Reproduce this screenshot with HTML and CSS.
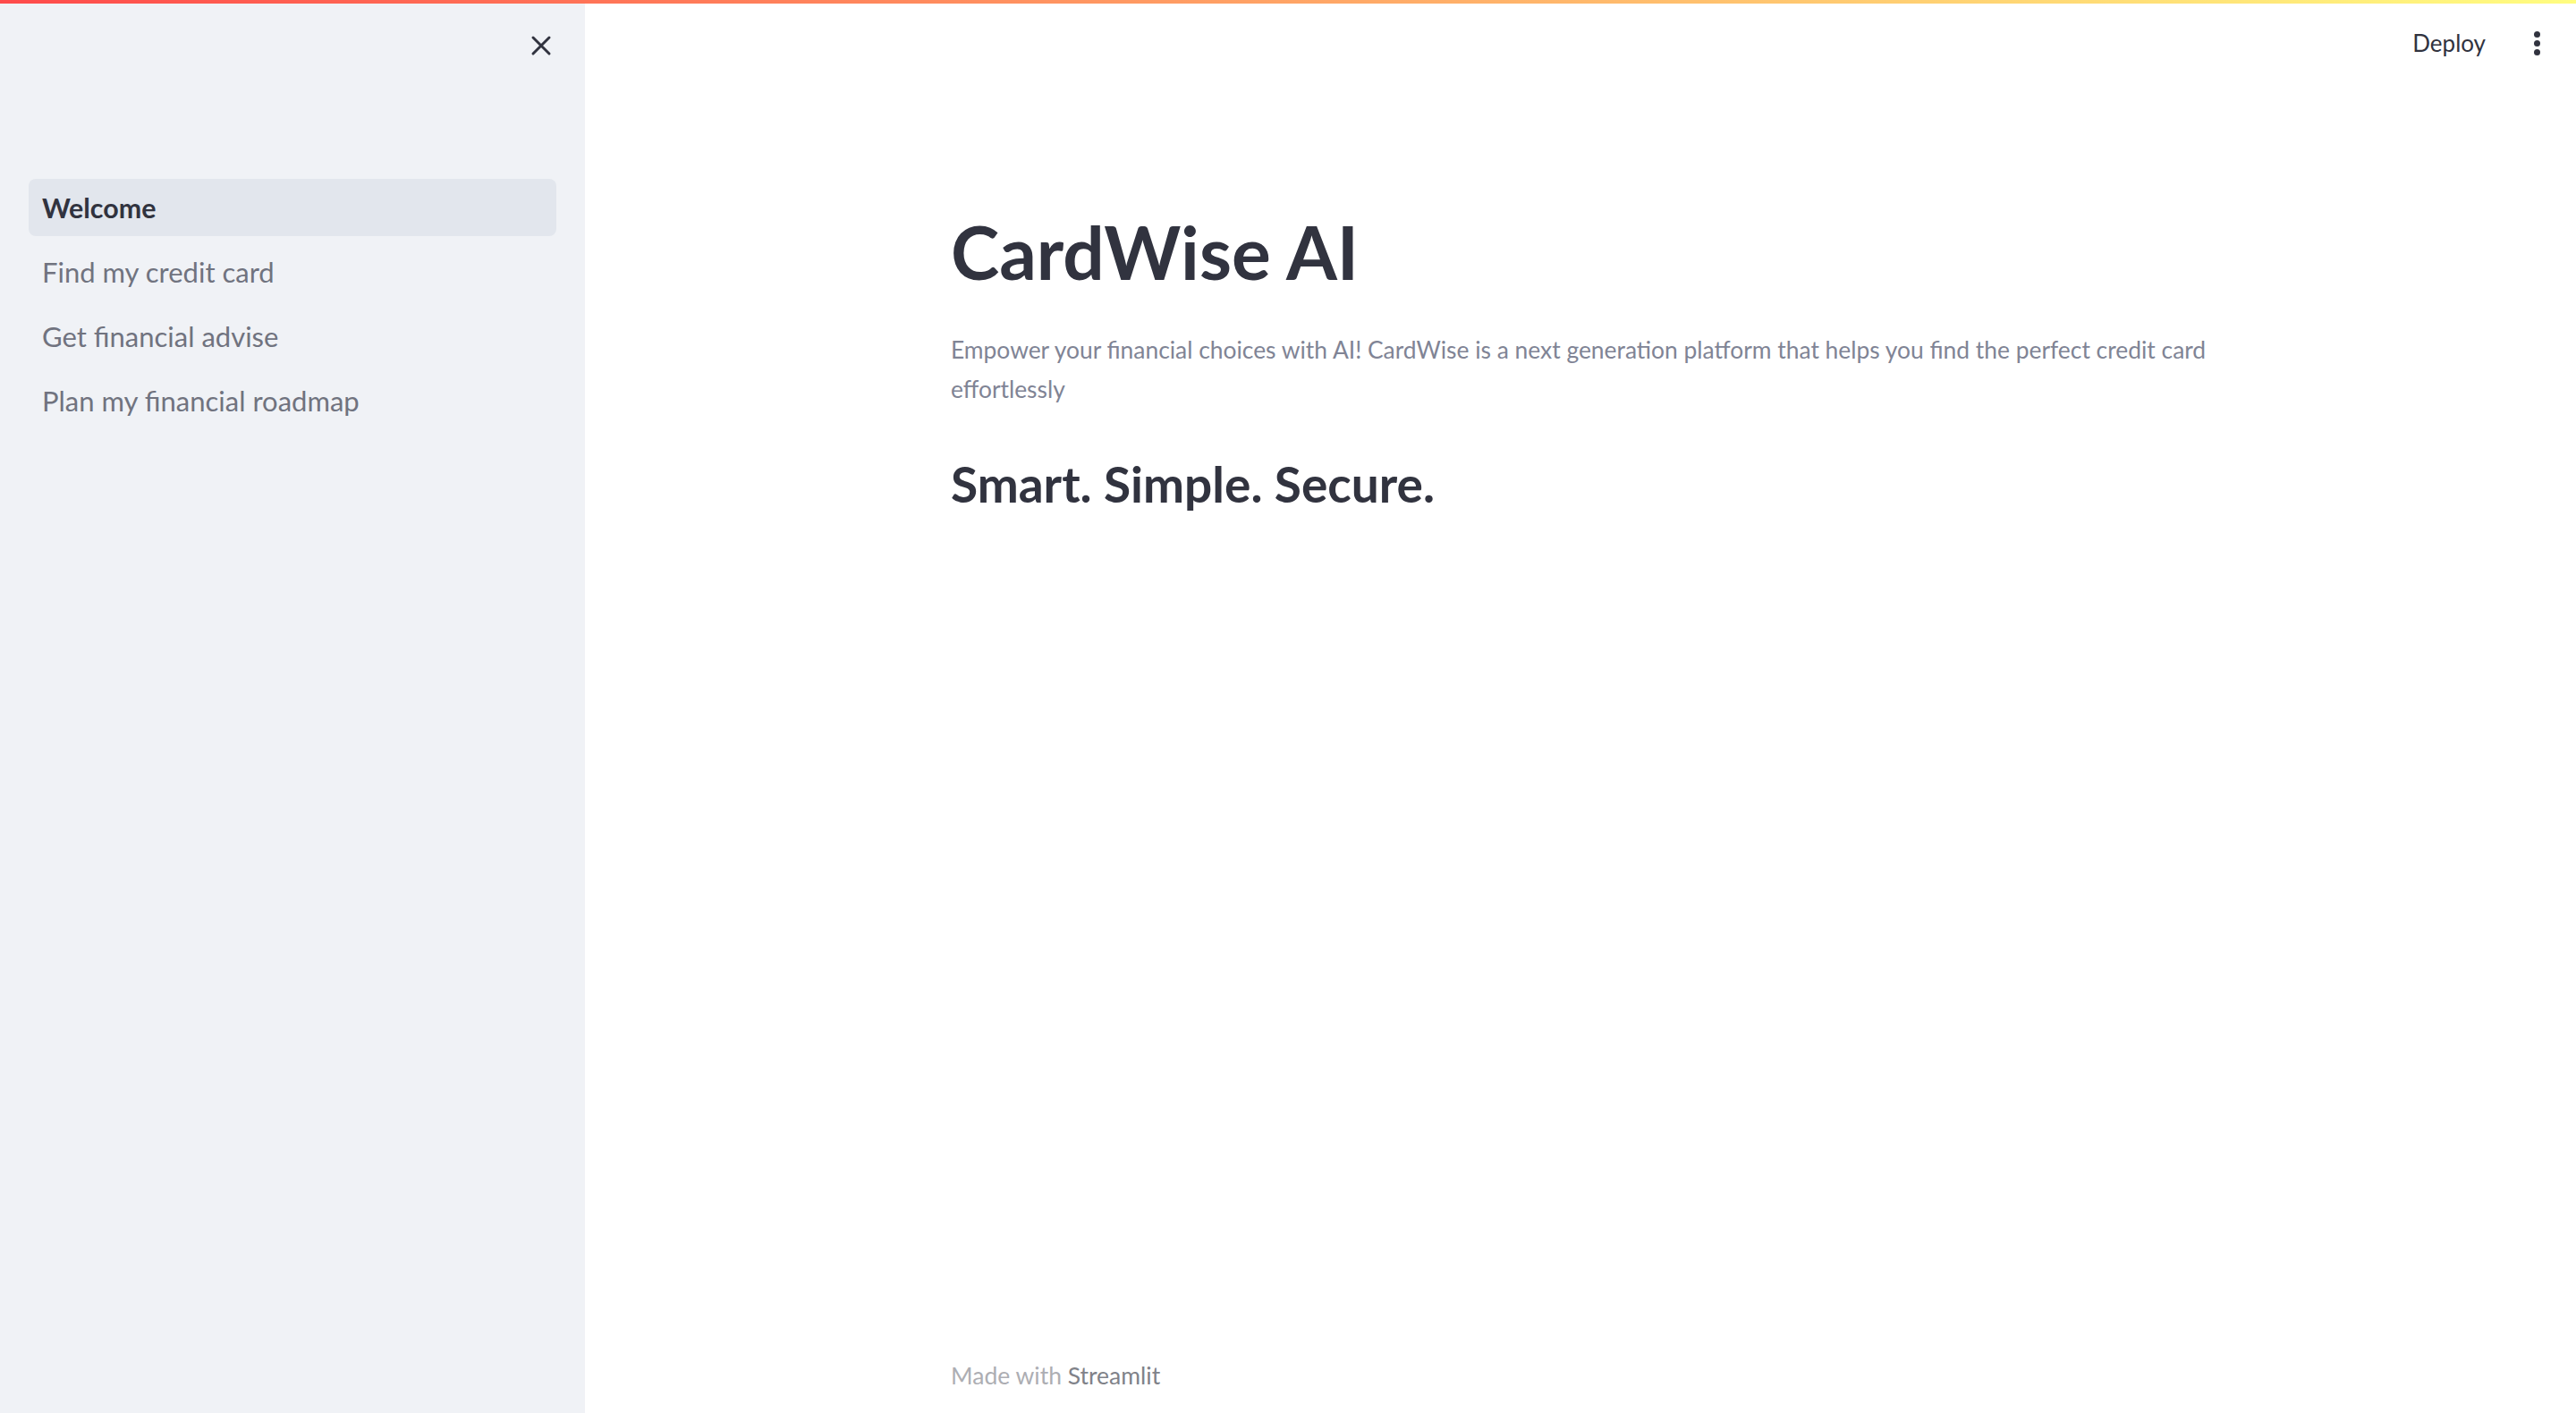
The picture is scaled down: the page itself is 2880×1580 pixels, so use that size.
FILE: index.html
```html
<!DOCTYPE html>
<html lang="en">
<head>
<meta charset="utf-8">
<title>CardWise AI</title>
<link rel="stylesheet" href="styles.css">
</head>
<body>
<div class="decoration"></div>
<div class="app">
  <aside class="sidebar">
    <div class="sidebar-head">
      <button class="close-btn" aria-label="Close sidebar">
        <svg width="24" height="24" viewBox="0 0 24 24"><path d="M3 3 L21 21 M21 3 L3 21" stroke="#31333F" stroke-width="3" stroke-linecap="round" fill="none"/></svg>
      </button>
    </div>
    <nav class="nav">
      <a class="nav-item active">Welcome</a>
      <a class="nav-item">Find my credit card</a>
      <a class="nav-item">Get financial advise</a>
      <a class="nav-item">Plan my financial roadmap</a>
    </nav>
  </aside>
  <main class="main">
    <header class="toolbar">
      <span class="deploy">Deploy</span>
      <span class="kebab"><i></i><i></i><i></i></span>
    </header>
    <section class="content">
      <h1 class="title">CardWise AI</h1>
      <p class="lead">Empower your financial choices with AI! CardWise is a next generation platform that helps you find the perfect credit card effortlessly</p>
      <h2 class="subtitle">Smart. Simple. Secure.</h2>
    </section>
    <footer class="footer"><span class="made">Made with</span> <span class="brand">Streamlit</span></footer>
  </main>
</div>
</body>
</html>
```
FILE: styles.css
```css
* { box-sizing: border-box; }
html, body { margin: 0; padding: 0; }
body {
  font-family: "Lato", "Liberation Sans", sans-serif;
  color: #31333F;
  background: #ffffff;
  width: 2880px;
  height: 1580px;
  overflow: hidden;
  position: relative;
}
.decoration {
  position: absolute;
  top: 0; left: 0; right: 0;
  height: 4px;
  background: linear-gradient(90deg, rgb(255, 75, 75), rgb(255, 253, 128));
  z-index: 10;
}
.app {
  display: flex;
  height: 1580px;
}
.sidebar {
  width: 654px;
  flex: none;
  background: #F0F2F6;
  padding: 39px 32px 0 32px;
}
.sidebar-head {
  display: flex;
  justify-content: flex-end;
  padding-right: 5px;
}
.close-btn {
  width: 24px; height: 24px;
  padding: 0; border: 0; background: none;
  display: block;
}
.close-btn svg { display: block; }
.nav {
  margin-top: 137px;
  display: flex;
  flex-direction: column;
  gap: 8px;
}
.nav-item {
  height: 64px;
  display: flex;
  align-items: center;
  padding-left: 15px;
  border-radius: 8px;
  font-size: 31px;
  color: #70737F;
}
.nav-item.active {
  background: #E2E6ED;
  color: #31333F;
  font-weight: 700;
  font-size: 30.4px;
}
.main {
  flex: 1;
  display: flex;
  flex-direction: column;
}
.toolbar {
  height: 96px;
  display: flex;
  align-items: center;
  justify-content: flex-end;
  padding-right: 32px;
  gap: 45px;
}
.deploy {
  font-size: 26px;
  color: #31333F;
}
.kebab {
  width: 24px;
  display: flex;
  flex-direction: column;
  align-items: center;
  gap: 3px;
}
.kebab i {
  width: 7px; height: 7px;
  border-radius: 50%;
  background: #31333F;
  display: block;
}
.content {
  width: 1408px;
  margin: 0 auto;
}
.title {
  margin: 136px 0 0 0;
  font-size: 82px;
  line-height: 1.2;
  font-weight: 700;
  color: #31333F;
}
.lead {
  margin: 39px 0 0 0;
  font-size: 26.4px;
  line-height: 44px;
  color: #808495;
}
.subtitle {
  margin: 51px 0 0 0;
  font-size: 55px;
  line-height: 1.2;
  font-weight: 700;
  color: #31333F;
}
.footer {
  margin-top: auto;
  width: 1408px;
  margin-left: auto;
  margin-right: auto;
  padding-bottom: 22px;
  font-size: 26.5px;
  line-height: 40px;
}
.made { color: #ADAEB3; }
.brand { color: #808289; }
```
